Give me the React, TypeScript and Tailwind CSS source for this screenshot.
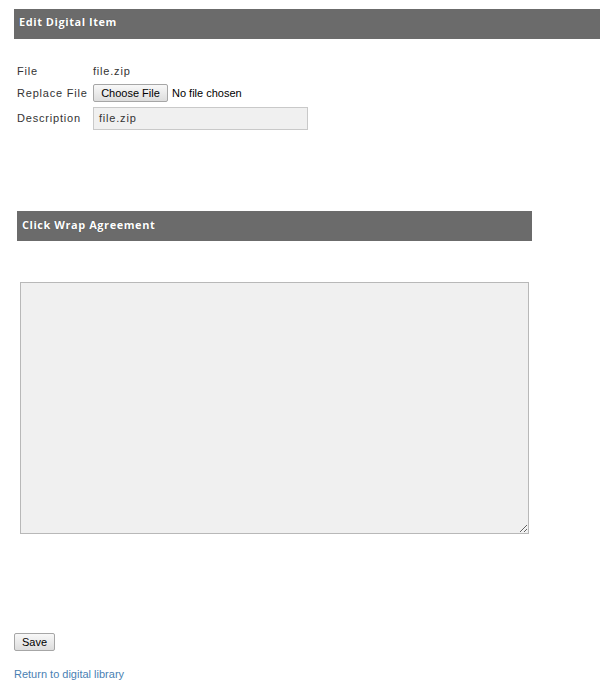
export default function App() {
  return (
    <div className="w-[600px] min-h-[690px] bg-white pt-[9px] font-['Liberation_Sans',Arial,sans-serif] text-[11px] text-[#333]">
      <div className="ml-[14px] flex h-[30px] items-center bg-[#6b6b6b] pb-[3px] pl-[5px]">
        <h2 className="font-['Open_Sans',sans-serif] text-[11px] font-bold tracking-[0.55px] text-white [text-shadow:0_0_1px_rgba(0,0,0,0.4)]">
          Edit Digital Item
        </h2>
      </div>

      <div className="ml-[17px] mt-[23px] flex flex-col tracking-[0.8px]">
        <div className="flex h-[18px] items-center">
          <span className="w-[76px]">File</span>
          <span>file.zip</span>
        </div>
        <div className="mt-[4px] flex h-[18px] items-center">
          <span className="w-[76px]">Replace File</span>
          <button
            type="button"
            className="h-[18px] w-[75px] rounded-[2px] border border-[#a6a6a6] bg-gradient-to-b from-[#f8f8f8] to-[#dddddd] text-[11px] tracking-normal text-black"
          >
            Choose File
          </button>
          <span className="ml-[4px] tracking-normal text-black">No file chosen</span>
        </div>
        <div className="mt-[5px] flex h-[23px] items-center">
          <span className="w-[76px]">Description</span>
          <div className="flex h-[23px] w-[215px] items-center border border-[#c9c9c9] bg-[#f0f0f0] pl-[5px]">
            file.zip
          </div>
        </div>
      </div>

      <div className="ml-[17px] mt-[81px] flex h-[30px] w-[515px] items-center bg-[#6b6b6b] pb-[1px] pl-[5px]">
        <h2 className="font-['Open_Sans',sans-serif] text-[11px] font-bold tracking-[0.55px] text-white [text-shadow:0_0_1px_rgba(0,0,0,0.4)]">
          Click Wrap Agreement
        </h2>
      </div>

      <textarea className="ml-[20px] mt-[41px] block h-[252px] w-[509px] border border-[#b8b8b8] bg-[#f0f0f0] outline-none" />

      <button
        type="button"
        className="ml-[14px] mt-[99px] block h-[18px] w-[41px] rounded-[2px] border border-[#a6a6a6] bg-gradient-to-b from-[#f8f8f8] to-[#dddddd] text-[11px] text-black"
      >
        Save
      </button>

      <a href="#" className="ml-[14px] mt-[17px] block leading-[12px] text-[#4a7fb3]">
        Return to digital library
      </a>
    </div>
  );
}
